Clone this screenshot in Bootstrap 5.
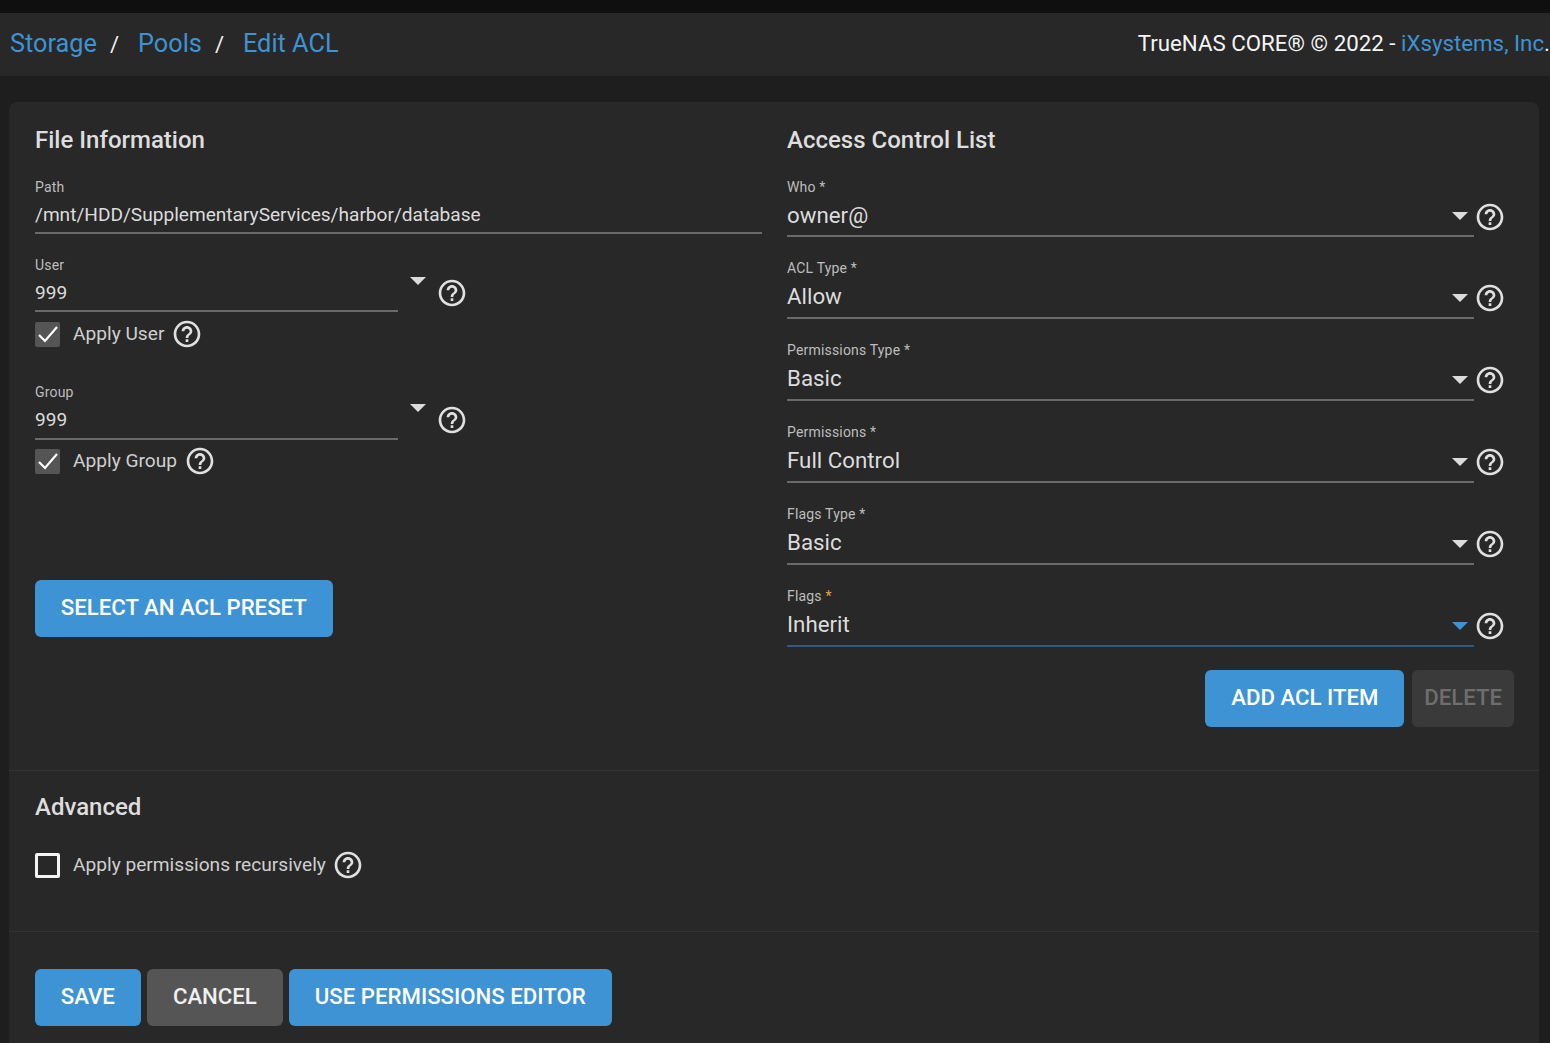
<!DOCTYPE html>
<html lang="en">
<head>
<meta charset="utf-8">
<title>Edit ACL</title>
<link rel="stylesheet" href="https://cdn.jsdelivr.net/npm/bootstrap@5.3.0/dist/css/bootstrap.min.css">
<style>
html,body{height:1043px;overflow:hidden}
body{background:#1e1e1e;font-family:Roboto,"Liberation Sans",sans-serif;color:#dcdcdc}
.topstrip{height:13px;background:#0f0f0f}
.crumbbar{height:63px;background:#282828;padding:0 0 0 10px;white-space:nowrap;overflow:hidden}
.crumbbar a{color:#3d93d3;text-decoration:none}
.crumbs{font-size:25.3px;margin-bottom:1px}
.crumbs i{font-style:normal;color:#f0f0f0;margin:0 19px 0 13px;font-size:22px}
.copy{font-size:22.3px;color:#f4f4f4;margin-bottom:2px}
.panel{margin:26px 11px 0 9px;background:#282828;border-radius:8px 8px 0 0;height:941px;overflow:hidden}
.sec-a{height:669px;padding:23px 25px 0 26px;border-bottom:1px solid #333}
.sec-b{height:161px;padding:21px 26px 0;border-bottom:1px solid #333}
.sec-c{padding:37px 26px 0}
.twocol{display:grid;grid-template-columns:727px 727px;column-gap:25px}
.head{font-size:24px;font-weight:500;line-height:30px;color:#dedede;margin:0}
.fld{border-bottom:2px solid #6a6a6a;height:56px}
.fld.tall{height:59px}
.fld.tall.active{border-color:#34597a}
.lab{font-size:14px;letter-spacing:.18px;line-height:18px;color:#bdbdbd;margin:0;display:block}
.val{font-size:19.1px;line-height:24px;margin-top:7px;color:#dcdcdc}
.tall .val{font-size:22.3px;line-height:28px;margin-top:5px}
.tall .lab{margin-top:-1px}
.fld.first-f .lab{margin-top:0}
.fld.first-f .val{margin-top:5px}
.star-hot{color:#e8a33d}
.path-f{margin-top:23px}
.stack-r{display:flex;flex-direction:column;gap:23px;margin-top:23px}
.sel-line{display:flex;align-items:flex-start}
.sel-line .grow-f{width:687px}
.user-f{width:363px;flex:none}
.user-top{margin-top:22px}
.group-row{margin-top:36px}
.group-row .user-f{height:57px}
.caret-d{width:0;height:0;border-left:8px solid transparent;border-right:8px solid transparent;border-top:8px solid #dcdcdc;flex:none}
.caret-blue{border-top-color:#3d93d3}
.in-f{display:flex;justify-content:space-between;align-items:flex-start}
.in-f .caret-d{margin:17px 6px 0 0}
.first-f .in-f .caret-d{margin-top:16px}
.left-caret{margin:21px 0 0 12px}
.qm{width:32px;height:32px;fill:#e0e0e0;flex:none;display:block}
.left-qm{margin:21px 0 0 10px}
.right-qm{margin:22px 0 0 0}
.first-qm{margin-top:23px}
.chk-row{display:flex;align-items:center;height:26px;font-size:19.15px;color:#cfcfcf}
.chk-a{margin-top:9px}
.chk-b{margin-top:8px}
.chk{width:25px;height:25px;border-radius:2px;background:#555;flex:none;margin-right:13px;display:flex;align-items:center;justify-content:center}
.chk svg{width:24px;height:24px;fill:none;stroke:#fff;stroke-width:2.2}
.chk.off{background:transparent;border:3px solid #f4f4f4}
.chk-row .qm{margin-left:6.5px}
.btnx{height:57px;padding:0 25.8px 2px;border:0;border-radius:6px;font-size:22.2px;font-weight:500;line-height:55px;color:#fff;background:#3d93d3}
.btnx:hover,.btnx:disabled{background:#3d93d3;color:#fff}
.btnx.grey,.btnx.grey:hover{background:#555;color:#f0f0f0}
.btnx.off,.btnx.off:disabled{background:#3a3a3a;color:#6e6e6e;opacity:1;padding:0 12px 2px}
.preset{margin-top:106px}
.acl-btns{margin-top:23px;gap:8px}
.act-btns{gap:6.4px}
.adv-row{margin-top:30px}
</style>
</head>
<body>
<svg width="0" height="0" class="position-absolute"><symbol id="qicon" viewBox="0 0 24 24"><path d="M11 18h2v-2h-2v2zm1-16C6.48 2 2 6.48 2 12s4.48 10 10 10 10-4.48 10-10S17.52 2 12 2zm0 18c-4.41 0-8-3.59-8-8s3.59-8 8-8 8 3.59 8 8-3.59 8-8 8zm0-14c-2.21 0-4 1.79-4 4h2c0-1.1.9-2 2-2s2 .9 2 2c0 2-3 1.75-3 5h2c0-2.25 3-2.5 3-5 0-2.21-1.79-4-4-4z"/></symbol></svg>
<div class="topstrip"></div>
<div class="crumbbar d-flex justify-content-between align-items-center">
  <div class="crumbs"><a href="#">Storage</a><i>/</i><a href="#">Pools</a><i>/</i><a href="#">Edit ACL</a></div>
  <div class="copy">TrueNAS CORE® © 2022 - <a href="#">iXsystems, Inc</a>.</div>
</div>
<main class="panel">
  <section class="sec-a twocol">
    <div>
      <h5 class="head">File Information</h5>
      <div class="fld path-f"><label class="lab">Path</label><div class="val">/mnt/HDD/SupplementaryServices/harbor/database</div></div>
      <div class="sel-line user-top">
        <div class="fld user-f"><label class="lab">User</label><div class="val">999</div></div>
        <span class="caret-d left-caret"></span>
        <svg class="qm left-qm"><use href="#qicon"/></svg>
      </div>
      <div class="chk-row chk-a"><span class="chk"><svg viewBox="0 0 24 24"><path d="M3 13l6 6L21 5"/></svg></span>Apply User<svg class="qm"><use href="#qicon"/></svg></div>
      <div class="sel-line group-row">
        <div class="fld user-f"><label class="lab">Group</label><div class="val">999</div></div>
        <span class="caret-d left-caret"></span>
        <svg class="qm left-qm"><use href="#qicon"/></svg>
      </div>
      <div class="chk-row chk-b"><span class="chk"><svg viewBox="0 0 24 24"><path d="M3 13l6 6L21 5"/></svg></span>Apply Group<svg class="qm"><use href="#qicon"/></svg></div>
      <button class="btn btnx preset" type="button">SELECT AN ACL PRESET</button>
    </div>
    <div>
      <h5 class="head">Access Control List</h5>
      <div class="stack-r">
        <div class="sel-line"><div class="fld tall grow-f first-f"><label class="lab">Who *</label><div class="in-f"><div class="val">owner@</div><span class="caret-d"></span></div></div><svg class="qm right-qm first-qm"><use href="#qicon"/></svg></div>
        <div class="sel-line"><div class="fld tall grow-f"><label class="lab">ACL Type *</label><div class="in-f"><div class="val">Allow</div><span class="caret-d"></span></div></div><svg class="qm right-qm"><use href="#qicon"/></svg></div>
        <div class="sel-line"><div class="fld tall grow-f"><label class="lab">Permissions Type *</label><div class="in-f"><div class="val">Basic</div><span class="caret-d"></span></div></div><svg class="qm right-qm"><use href="#qicon"/></svg></div>
        <div class="sel-line"><div class="fld tall grow-f"><label class="lab">Permissions *</label><div class="in-f"><div class="val">Full Control</div><span class="caret-d"></span></div></div><svg class="qm right-qm"><use href="#qicon"/></svg></div>
        <div class="sel-line"><div class="fld tall grow-f"><label class="lab">Flags Type *</label><div class="in-f"><div class="val">Basic</div><span class="caret-d"></span></div></div><svg class="qm right-qm"><use href="#qicon"/></svg></div>
        <div class="sel-line"><div class="fld tall grow-f active"><label class="lab">Flags <span class="star-hot">*</span></label><div class="in-f"><div class="val">Inherit</div><span class="caret-d caret-blue"></span></div></div><svg class="qm right-qm"><use href="#qicon"/></svg></div>
      </div>
      <div class="d-flex justify-content-end acl-btns">
        <button class="btn btnx" type="button">ADD ACL ITEM</button>
        <button class="btn btnx off" type="button" disabled>DELETE</button>
      </div>
    </div>
  </section>
  <section class="sec-b">
    <h5 class="head">Advanced</h5>
    <div class="chk-row adv-row"><span class="chk off"></span>Apply permissions recursively<svg class="qm"><use href="#qicon"/></svg></div>
  </section>
  <section class="sec-c d-flex act-btns">
    <button class="btn btnx" type="button">SAVE</button>
    <button class="btn btnx grey" type="button">CANCEL</button>
    <button class="btn btnx" type="button">USE PERMISSIONS EDITOR</button>
  </section>
</main>
</body>
</html>
